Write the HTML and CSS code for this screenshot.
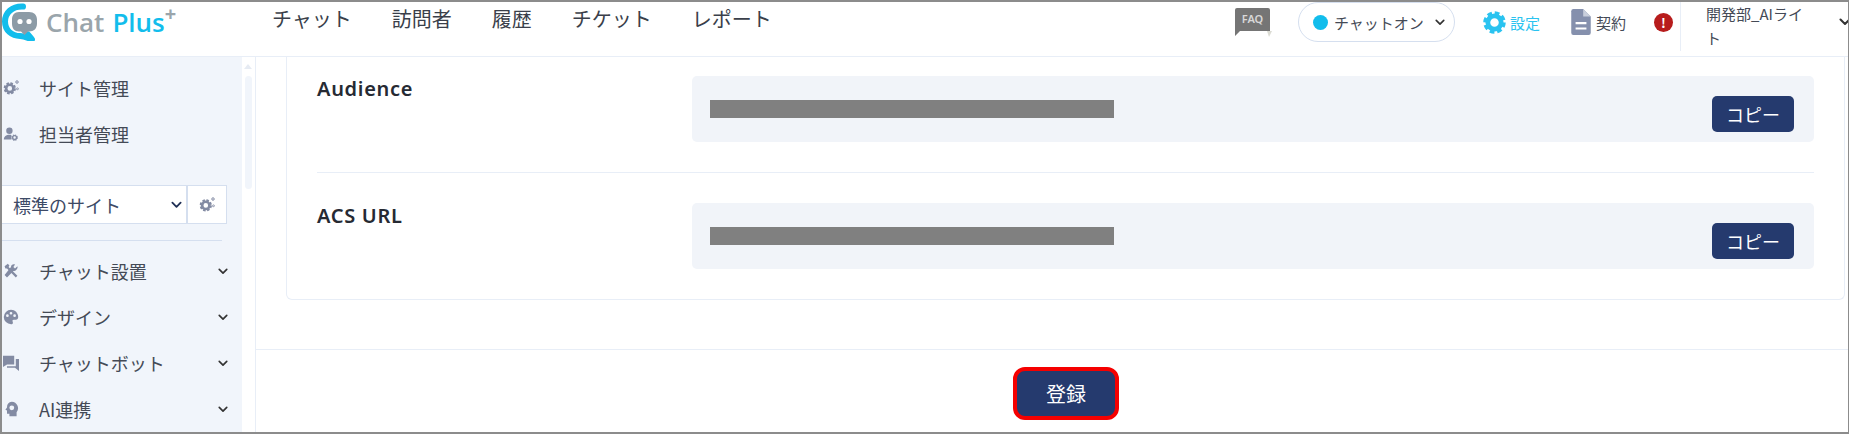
FILE: index.html
```html
<!DOCTYPE html>
<html lang="ja">
<head>
  <meta charset="utf-8">
  <title>Chat Plus</title>
  <link rel="stylesheet" href="styles.css">
</head>
<body>
  <svg class="defs" width="0" height="0">
    <symbol id="cog" viewBox="0 0 24 24">
      <circle cx="12" cy="12" r="8.6" fill="none" stroke="currentColor" stroke-width="4.4" stroke-dasharray="4.2 2.55"/>
      <circle cx="12" cy="12" r="6.4" fill="none" stroke="currentColor" stroke-width="4.6"/>
    </symbol>
    <symbol id="chev" viewBox="0 0 12 8">
      <path d="M1.5 1.5 6 6l4.5-4.5" fill="none" stroke="currentColor" stroke-width="2" stroke-linecap="round" stroke-linejoin="round"/>
    </symbol>
    <symbol id="cogs" viewBox="0 0 20 20">
      <use href="#cog" x="0" y="2" width="17" height="17"/>
      <use href="#cog" x="15" y="0" width="5" height="5"/>
      <use href="#cog" x="16" y="9" width="4" height="4"/>
    </symbol>
  </svg>

  <div class="frame">
    <header class="topbar">
      <div class="logo">
        <svg class="logo-mark" viewBox="0 0 36 38" width="36" height="38">
          <path d="M21 3.500C10 3 3 10 3 18.500 3 27.500 10 33 18 33c4 0 7 1.500 12 3.500-1.500-2-2.500-3.500-4-5" fill="none" stroke="#12bdec" stroke-width="6" stroke-linecap="round" stroke-linejoin="round"/>
          <path d="M17 9h10c5 0 8 3 8 7.500v4c0 5-3 8-8 8h-1l-3.500 3.500-3.500-3.500h-2c-4.500 0-7-3-7-8v-4C10 12 12.500 9 17 9z" fill="#8c9ba6"/>
          <circle cx="18" cy="18.500" r="2.600" fill="#fff"/>
          <circle cx="27" cy="18.500" r="2.600" fill="#fff"/>
        </svg>
        <span class="logo-chat">Chat</span>
        <span class="logo-plus">Plus</span>
        <span class="logo-sup">+</span>
      </div>

      <nav class="mainnav">
        <a>チャット</a>
        <a>訪問者</a>
        <a>履歴</a>
        <a>チケット</a>
        <a>レポート</a>
      </nav>

      <div class="tools">
        <svg class="faq" viewBox="0 0 37 29" width="37" height="29">
          <path d="M32 23h5l-3 6z" fill="#dcdcd4"/>
          <path d="M2 0h31a2 2 0 0 1 2 2v21H5l-5 5V2a2 2 0 0 1 2-2z" fill="#757575"/>
          <text x="17.500" y="15" text-anchor="middle" class="faq-text">FAQ</text>
        </svg>
        <div class="status-pill">
          <span class="status-dot"></span>
          <span>チャットオン</span>
          <svg class="pill-chev" width="10" height="7"><use href="#chev"/></svg>
        </div>
        <a class="tool tool-setting">
          <svg width="25" height="25"><use href="#cog"/></svg>設定
        </a>
        <a class="tool tool-contract">
          <svg viewBox="0 0 18 24" width="20" height="26">
            <path d="M2 0h9l7 7v15a2 2 0 0 1-2 2H2a2 2 0 0 1-2-2V2a2 2 0 0 1 2-2z" fill="#8590ad"/>
            <path d="M11 0l7 7h-7z" fill="#c9cfdc"/>
            <path d="M4 13h10M4 18h10" stroke="#fff" stroke-width="2"/>
          </svg>契約
        </a>
        <span class="alert">!</span>
        <div class="account">
          <span class="account-name">開発部_AIライト</span>
          <svg class="account-chev" width="12" height="8"><use href="#chev"/></svg>
        </div>
      </div>
    </header>

    <div class="body-row">
      <aside class="sidebar">
        <a class="side-item">
          <svg class="side-icon"><use href="#cogs"/></svg>サイト管理
        </a>
        <a class="side-item">
          <svg class="side-icon" viewBox="0 0 20 20">
            <circle cx="8" cy="6" r="4"/>
            <path d="M1 17c0-4 3-6 7-6 1 0 2 .2 2.500.5V17z"/>
            <use href="#cog" x="10" y="10" width="9" height="9"/>
          </svg>担当者管理
        </a>

        <div class="site-select">
          <div class="select-box">
            <span>標準のサイト</span>
            <svg width="11" height="8"><use href="#chev"/></svg>
          </div>
          <div class="select-btn">
            <svg class="side-icon"><use href="#cogs"/></svg>
          </div>
        </div>

        <hr class="side-rule">

        <a class="side-item">
          <svg class="side-icon" viewBox="0 0 20 20">
            <path d="M2 4l4-3 2 2-1 2 11 11-2 2L5 7 3 7z"/>
            <path d="M18 4l-3 3-2-2 2-3c-2-1-5 0-5 3L2 15l3 3 8-8c3 0 6-3 5-6z"/>
          </svg>チャット設置
          <svg class="side-chev" width="10" height="7"><use href="#chev"/></svg>
        </a>
        <a class="side-item">
          <svg class="side-icon" viewBox="0 0 20 20">
            <path fill-rule="evenodd" d="M10 1a9 9 0 1 0 0 18c3 0 2.500-2.500 2-3.500s0-2 1.500-2H16c2 0 3-1.500 3-3.500C19 5 15 1 10 1zM5.500 10a1.700 1.700 0 1 1 0-3.400 1.700 1.700 0 0 1 0 3.400zM10 7a1.700 1.700 0 1 1 0-3.400A1.700 1.700 0 0 1 10 7zm4.500 3a1.700 1.700 0 1 1 0-3.400 1.700 1.700 0 0 1 0 3.400z"/>
          </svg>デザイン
          <svg class="side-chev" width="10" height="7"><use href="#chev"/></svg>
        </a>
        <a class="side-item">
          <svg class="side-icon" viewBox="0 0 20 20">
            <path d="M0 1h14v11H5l-5 3z"/>
            <path d="M16 5h4v15l-5-4H5v-2h11z"/>
          </svg>チャットボット
          <svg class="side-chev" width="10" height="7"><use href="#chev"/></svg>
        </a>
        <a class="side-item">
          <svg class="side-icon" viewBox="0 0 20 20">
            <path fill-rule="evenodd" d="M11 1a8 8 0 0 1 6 13v5H8v-3H5v-4l-2-1 2-3a7 7 0 0 1 6-7zm0 4.500a3 3 0 1 0 0 6 3 3 0 0 0 0-6z"/>
          </svg>AI連携
          <svg class="side-chev" width="10" height="7"><use href="#chev"/></svg>
        </a>
      </aside>

      <div class="side-scroll">
        <span class="scroll-up"></span>
        <span class="scroll-thumb"></span>
      </div>

      <main class="content">
        <div class="content-inner">
          <section class="card">
            <div class="form-row form-row-first">
              <div class="form-label">Audience</div>
              <div class="form-field">
                <div class="redact"></div>
                <button class="copy-btn">コピー</button>
              </div>
            </div>
            <div class="form-row">
              <div class="form-label">ACS URL</div>
              <div class="form-field">
                <div class="redact"></div>
                <button class="copy-btn">コピー</button>
              </div>
            </div>
          </section>
        </div>
        <footer class="form-footer">
          <button class="save-btn">登録</button>
        </footer>
      </main>
    </div>
  </div>
</body>
</html>
```

FILE: styles.css
```css
* {
  box-sizing: border-box;
}
html, body {
  margin: 0;
  padding: 0;
}
body {
  font-family: "Noto Sans CJK JP", "Noto Sans", sans-serif;
  color: #3a3f4a;
  background: #fff;
  overflow: hidden;
}
.defs {
  position: absolute;
}
.frame {
  width: 1849px;
  height: 434px;
  border: 2px solid #8c8c8c;
  border-right-width: 1px;
  display: flex;
  flex-direction: column;
  overflow: hidden;
}

/* top bar */
.topbar {
  height: 55px;
  flex: none;
  display: flex;
  align-items: flex-start;
  border-bottom: 1px solid #e8eef7;
}
.logo {
  width: 270px;
  height: 38px;
  margin-top: 1px;
  display: flex;
  align-items: center;
  gap: 8px;
  font-family: "Open Sans", sans-serif;
  font-size: 26px;
  font-weight: 600;
  line-height: 34px;
}
.logo-mark {
  flex: none;
}
.logo-chat {
  color: #9aa5ab;
}
.logo-plus {
  color: #12bdec;
}
.logo-sup {
  color: #9aa5ab;
  font-size: 20px;
  font-weight: 700;
  line-height: 20px;
  margin-left: -8px;
  margin-top: -16px;
}
.mainnav {
  display: flex;
  gap: 40px;
  font-size: 20px;
  line-height: 34px;
}
.tools {
  margin-left: auto;
  display: flex;
  align-items: center;
  height: 40px;
  color: #444a56;
}
.faq {
  margin-right: 26px;
  margin-bottom: -1px;
}
.faq-text {
  font-family: "Noto Sans", sans-serif;
  font-size: 11px;
  font-weight: 600;
  fill: #d8d8d8;
}
.status-pill {
  width: 157px;
  height: 40px;
  border: 1px solid #d5dfef;
  border-radius: 20px;
  display: flex;
  align-items: center;
  padding-left: 14px;
  font-size: 15px;
  color: #444a56;
  white-space: nowrap;
}
.status-dot {
  width: 15px;
  height: 15px;
  margin-right: 6px;
  border-radius: 50%;
  background: #12bdec;
}
.pill-chev {
  margin-left: 11px;
  color: #333;
}
.tool {
  display: flex;
  align-items: center;
  font-size: 15px;
  white-space: nowrap;
}
.tool-setting {
  margin-left: 27px;
  gap: 3px;
  color: #2ac3f0;
}
.tool-contract {
  margin-left: 31px;
  gap: 5px;
}
.alert {
  margin-left: 28px;
  width: 19px;
  height: 19px;
  border-radius: 50%;
  background: #b71c1c;
  color: #fff;
  font-size: 13px;
  font-weight: 700;
  line-height: 19px;
  text-align: center;
}
.account {
  margin-left: 7px;
  height: 49px;
  width: 168px;
  padding-left: 25px;
  border-left: 1px solid #e8eef7;
  display: flex;
  align-items: flex-start;
  font-size: 15px;
  line-height: 24px;
  align-self: flex-start;
}
.account-name {
  width: 105px;
  flex: none;
}
.account-chev {
  flex: none;
  margin-left: 28px;
  margin-top: 16px;
  color: #333;
}

/* sidebar */
.body-row {
  flex: 1;
  display: flex;
  min-height: 0;
}
.sidebar {
  width: 240px;
  flex: none;
  background: #f1f5fb;
  padding-top: 8px;
  overflow: hidden;
}
.side-item {
  display: flex;
  align-items: center;
  height: 46px;
  padding: 0 14px 0 1px;
  font-size: 18px;
  color: #444a56;
  white-space: nowrap;
}
.side-icon {
  flex: none;
  width: 16px;
  height: 16px;
  margin-right: 20px;
  fill: #838ba3;
  color: #838ba3;
}
.side-chev {
  margin-left: auto;
  color: #333;
}
.site-select {
  display: flex;
  height: 39px;
  margin-top: 28px;
  width: 225px;
}
.select-box {
  width: 185px;
  background: #fff;
  border: 1px solid #d5dfef;
  border-left: none;
  display: flex;
  align-items: center;
  justify-content: space-between;
  padding: 0 4px 0 11px;
  font-size: 18px;
  color: #3d4a66;
}
.select-box svg {
  color: #1f2f55;
}
.select-btn {
  width: 40px;
  background: #fff;
  border: 1px solid #d5dfef;
  display: flex;
  align-items: center;
  justify-content: center;
}
.select-btn .side-icon {
  margin: 0;
}
.side-rule {
  margin: 16px 20px 7px 0;
  border: none;
  border-top: 1px solid #d5dfef;
}
.side-scroll {
  width: 14px;
  flex: none;
  position: relative;
  border-right: 1px solid #e8eef7;
}
.scroll-up {
  position: absolute;
  left: 2px;
  top: 7px;
  border: 4px solid transparent;
  border-bottom: 5px solid #e6ebf3;
  border-top: none;
}
.scroll-thumb {
  position: absolute;
  left: 3px;
  top: 19px;
  width: 7px;
  height: 113px;
  border-radius: 4px;
  background: #f1f5fb;
}

/* main content */
.content {
  flex: 1;
  min-width: 0;
  display: flex;
  flex-direction: column;
}
.content-inner {
  height: 292px;
  padding: 0 3px 0 30px;
  flex: none;
}
.card {
  height: 243px;
  border: 1px solid #e8eef7;
  border-top: none;
  border-radius: 0 0 6px 6px;
  padding: 19px 30px 0;
}
.form-row {
  display: flex;
  height: 126px;
  padding-top: 30px;
  border-top: 1px solid #e8eef7;
}
.form-row-first {
  height: 96px;
  padding-top: 0;
  border-top: none;
}
.form-label {
  width: 375px;
  flex: none;
  font-family: "Noto Sans", sans-serif;
  font-size: 20px;
  font-weight: 600;
  letter-spacing: .7px;
  line-height: 26px;
  color: #262a33;
}
.form-field {
  flex: 1;
  height: 66px;
  display: flex;
  align-items: center;
  justify-content: space-between;
  padding: 0 20px 0 18px;
  background: #f1f4f9;
  border-radius: 5px;
}
.redact {
  width: 404px;
  height: 18px;
  background: #808080;
}
.copy-btn {
  width: 82px;
  height: 36px;
  margin-top: 10px;
  border: none;
  border-radius: 5px;
  background: #253a6e;
  color: #fff;
  font-family: inherit;
  font-size: 18px;
  padding: 0;
}
.form-footer {
  flex: 1;
  border-top: 1px solid #e8eef7;
  display: flex;
  justify-content: center;
  padding: 17px 0 0 28px;
}
.save-btn {
  width: 106px;
  height: 53px;
  border: 4px solid #f50000;
  border-radius: 12px;
  background: #253a6e;
  color: #fff;
  font-family: inherit;
  font-size: 20px;
  padding: 0;
}
```
